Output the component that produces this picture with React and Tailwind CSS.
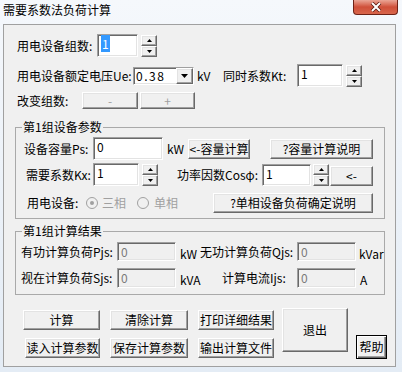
import React from 'react';

const sunken =
  'border border-t-[#a0a0a0] border-l-[#a0a0a0] border-r-white border-b-white shadow-[inset_1px_1px_0_#696969,inset_-1px_-1px_0_#e3e3e3]';
const raised =
  'border border-t-white border-l-white border-r-[#696969] border-b-[#696969] shadow-[inset_-1px_-1px_0_#a0a0a0,inset_1px_1px_0_#e3e3e3] bg-[#f0f0f0]';

function Edit({ className, value, disabled, selected }) {
  return (
    <div
      className={`${sunken} ${disabled ? 'bg-[#f0f0f0] text-[#7a7a7a]' : 'bg-white text-black'} shrink-0 pl-[3px] pt-[2px] text-[12px] leading-[13px] ${className}`}
    >
      {selected ? <span className="bg-[#3399ff] px-[1px] text-white">{value}</span> : value}
    </div>
  );
}

function Spin({ className }) {
  return (
    <div className={`flex shrink-0 flex-col ${className}`}>
      <div className={`${raised} flex flex-1 items-center justify-center`}>
        <svg width="5" height="3" viewBox="0 0 5 3">
          <polygon points="2.5,0 5,3 0,3" fill="#000" />
        </svg>
      </div>
      <div className={`${raised} flex flex-1 items-center justify-center`}>
        <svg width="5" height="3" viewBox="0 0 5 3">
          <polygon points="0,0 5,0 2.5,3" fill="#000" />
        </svg>
      </div>
    </div>
  );
}

function Btn({ className, children, disabled }) {
  return (
    <button
      className={`${raised} flex shrink-0 items-center justify-center text-[12px] leading-none ${disabled ? 'text-[#a0a0a0]' : 'text-black'} ${className}`}
    >
      {children}
    </button>
  );
}

function Label({ className, children }) {
  return <span className={`shrink-0 whitespace-nowrap text-[12px] leading-none ${className}`}>{children}</span>;
}

function Radio({ checked }) {
  return (
    <span className="flex h-[12px] w-[12px] shrink-0 items-center justify-center rounded-full border border-[#a0a0a0] bg-[#f0f0f0]">
      {checked && <span className="h-[4px] w-[4px] rounded-full bg-[#a0a0a0]" />}
    </span>
  );
}

export default function App() {
  return (
    <div className="flex h-[372px] w-[402px] flex-col overflow-hidden bg-linear-to-b from-[#f5f8fc] to-[#e4ecf5] font-['Noto_Sans_CJK_SC','Noto_Sans',sans-serif] text-black">
      {/* title bar */}
      <div className="flex h-[24px] shrink-0">
        <span className="pl-[3px] pt-[3px] text-[12px] leading-[14px]">需要系数法负荷计算</span>
        <div className="ml-auto mr-[4px] flex h-[15px] w-[45px] items-center justify-center rounded-b-[4px] border border-t-0 border-[#6e2216] bg-linear-to-b from-[#eaa596] via-[#cf4f39] to-[#d8664c]">
          <svg width="12" height="10" viewBox="0 0 12 10">
            <path d="M2 1 L10 9 M10 1 L2 9" stroke="#5a1a10" strokeWidth="3.6" />
            <path d="M2 1 L10 9 M10 1 L2 9" stroke="#fff" strokeWidth="2" />
          </svg>
        </div>
      </div>

      <div className="flex">
        {/* client area */}
        <div className="ml-[3px] flex h-[343px] w-[393px] flex-col border border-[#a0a0a0] bg-[#f0f0f0]">
          {/* row 1 */}
          <div className="ml-[13px] mt-[9px] flex h-[23px] items-center">
            <Label className="w-[80px]">用电设备组数:</Label>
            <Edit className="h-[23px] w-[41px]" value="1" selected />
            <Spin className="ml-[3px] h-[22px] w-[16px]" />
          </div>

          {/* row 2 */}
          <div className="ml-[13px] mt-[7px] flex h-[23px] items-center">
            <Label className="w-[116px]">用电设备额定电压Ue:</Label>
            <div className={`${sunken} flex h-[18px] w-[61px] shrink-0 bg-white`}>
              <span className="flex flex-1 items-center pl-[2px] text-[12px] leading-none tracking-[1.5px]">0.38</span>
              <div className={`${raised} flex h-full w-[17px] items-center justify-center`}>
                <svg width="7" height="4" viewBox="0 0 7 4">
                  <polygon points="0,0 7,0 3.5,4" fill="#000" />
                </svg>
              </div>
            </div>
            <Label className="ml-[3px] w-[26px]">kV</Label>
            <Label className="w-[74px]">同时系数Kt:</Label>
            <Edit className="h-[23px] w-[46px]" value="1" />
            <Spin className="ml-[3px] h-[22px] w-[16px]" />
          </div>

          {/* row 3 */}
          <div className="ml-[13px] mt-[5px] flex h-[17px] items-center">
            <Label className="w-[65px]">改变组数:</Label>
            <Btn className="h-[17px] w-[56px]" disabled>-</Btn>
            <Btn className="ml-[2px] h-[17px] w-[55px]" disabled>+</Btn>
          </div>

          {/* group 1 */}
          <fieldset className="ml-[11px] mt-[11px] w-[370px] border border-[#a9a9a9] pb-[5px]">
            <legend className="ml-[6px] px-[1px] text-[12px] leading-[14px]">第1组设备参数</legend>
            <div className="ml-[8px] mt-[3px] flex h-[23px] items-center">
              <Label className="w-[69px]">设备容量Ps:</Label>
              <Edit className="h-[23px] w-[70px]" value="0" />
              <Label className="ml-[4px] w-[21px]">kW</Label>
              <Btn className="h-[20px] w-[62px]">&lt;-容量计算</Btn>
              <Btn className="ml-[20px] h-[20px] w-[103px]">?容量计算说明</Btn>
            </div>
            <div className="ml-[10px] mt-[3px] flex h-[23px] items-center">
              <Label className="w-[67px]">需要系数Kx:</Label>
              <Edit className="h-[23px] w-[46px]" value="1" />
              <Spin className="ml-[3px] h-[22px] w-[16px]" />
              <Label className="ml-[19px] w-[85px]">功率因数Cosφ:</Label>
              <Edit className="h-[22px] w-[49px]" value="1" />
              <Spin className="ml-[2px] h-[22px] w-[16px]" />
              <Btn className="ml-[1px] h-[20px] w-[43px] self-end">&lt;-</Btn>
            </div>
            <div className="ml-[11px] mt-[7px] flex h-[20px] items-center">
              <Label className="w-[59px]">用电设备:</Label>
              <Radio checked />
              <Label className="ml-[4px] w-[35px] text-[#a0a0a0]">三相</Label>
              <Radio />
              <Label className="ml-[5px] text-[#a0a0a0]">单相</Label>
              <Btn className="ml-auto mr-[11px] h-[20px] w-[160px]">?单相设备负荷确定说明</Btn>
            </div>
          </fieldset>

          {/* group 2 */}
          <fieldset className="ml-[11px] mt-[5px] w-[370px] border border-[#a9a9a9] pb-[6px]">
            <legend className="ml-[6px] px-[1px] text-[12px] leading-[14px]">第1组计算结果</legend>
            <div className="ml-[5px] mt-[4px] flex h-[19px] items-center">
              <Label className="w-[96px]">有功计算负荷Pjs:</Label>
              <Edit className="h-[19px] w-[59px]" value="0" disabled />
              <Label className="ml-[4px] w-[20px] pt-[4px]">kW</Label>
              <Label className="w-[97px]">无功计算负荷Qjs:</Label>
              <Edit className="h-[19px] w-[59px]" value="0" disabled />
              <Label className="ml-[3px] pt-[4px]">kVar</Label>
            </div>
            <div className="ml-[5px] mt-[7px] flex h-[20px] items-center">
              <Label className="w-[96px]">视在计算负荷Sjs:</Label>
              <Edit className="h-[20px] w-[59px]" value="0" disabled />
              <Label className="ml-[4px] w-[42px] pt-[4px]">kVA</Label>
              <Label className="w-[75px]">计算电流Ijs:</Label>
              <Edit className="h-[20px] w-[59px]" value="0" disabled />
              <Label className="ml-[4px] pt-[4px]">A</Label>
            </div>
          </fieldset>

          {/* bottom buttons */}
          <div className="mt-[13px] flex items-start">
            <div className="ml-[19px] mt-[2px] flex flex-col gap-[8px]">
              <div className="flex">
                <Btn className="h-[20px] w-[77px]">计算</Btn>
                <Btn className="ml-[10px] h-[20px] w-[78px]">清除计算</Btn>
                <Btn className="ml-[10px] h-[20px] w-[76px]">打印详细结果</Btn>
              </div>
              <div className="ml-[2px] flex">
                <Btn className="h-[20px] w-[75px]">读入计算参数</Btn>
                <Btn className="ml-[10px] h-[20px] w-[78px]">保存计算参数</Btn>
                <Btn className="ml-[10px] h-[20px] w-[76px]">输出计算文件</Btn>
              </div>
            </div>
            <Btn className="ml-[8px] h-[44px] w-[66px]">退出</Btn>
            <button className="ml-[8px] mt-[27px] flex h-[24px] w-[31px] items-center justify-center border border-black bg-[#f0f0f0] text-[12px] leading-none shadow-[inset_1px_1px_0_#fff,inset_-1px_-1px_0_#696969,inset_-2px_-2px_0_#a0a0a0]">
              帮助
            </button>
          </div>
        </div>
      </div>
    </div>
  );
}
